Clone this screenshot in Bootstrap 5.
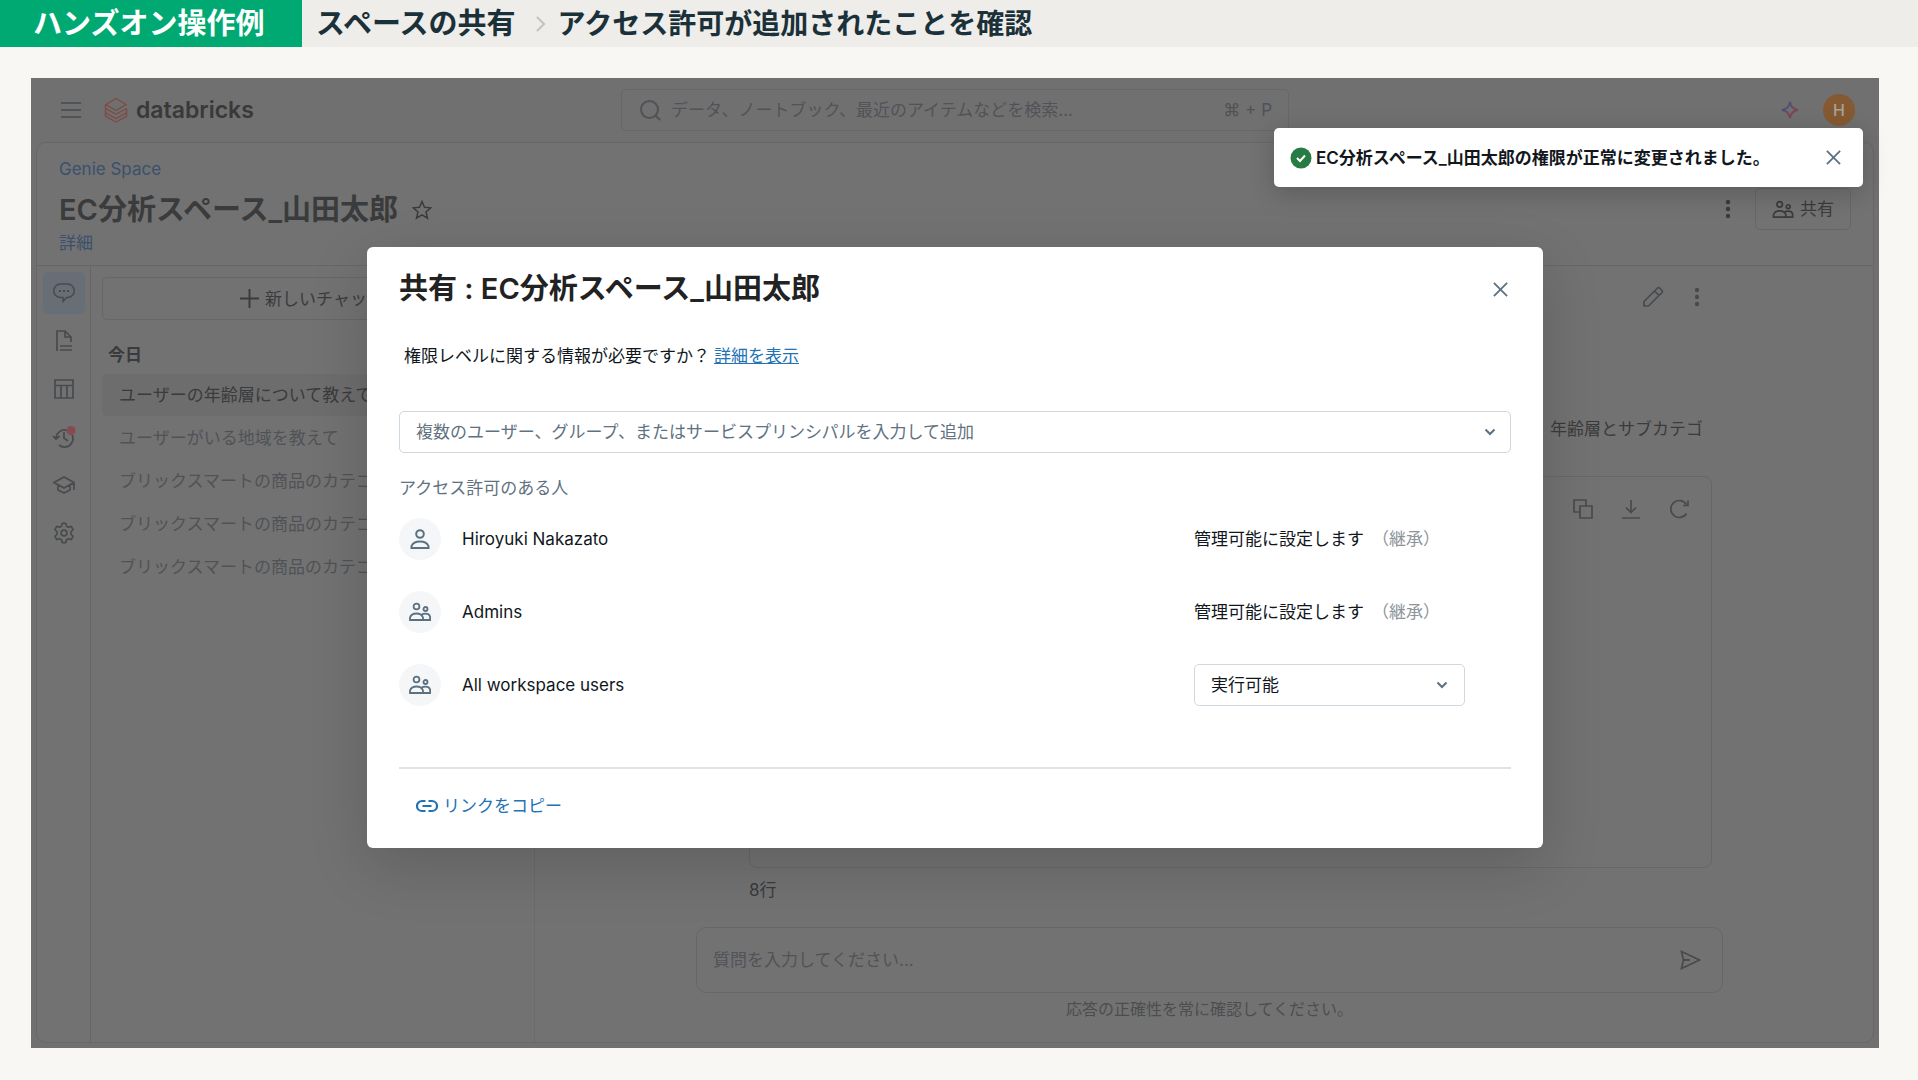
<!DOCTYPE html>
<html lang="ja">
<head>
<meta charset="utf-8">
<meta name="viewport" content="width=device-width, initial-scale=1">
<title>スペースの共有</title>
<link href="https://cdn.jsdelivr.net/npm/bootstrap@5.3.0/dist/css/bootstrap.min.css" rel="stylesheet">
<style>
  :root { --dim: #727272; --dim-line: #676767; --dim-text: #3a3b3c; --dim-muted: #4f5256; --dim-blue: #3a506c; }
  body { background: #f9f7f3; font-family: Inter, "Noto Sans CJK JP", sans-serif; font-size: 17px; line-height: 24px; color: #11171c; }
  svg { display: block; flex: none; fill: none; stroke: currentColor; stroke-width: 1.5; }
  button { color: inherit; }
  .plain-btn { border: 0; background: none; padding: 0; }

  .slide-bar { height: 47px; background: #eeedea; color: #1b3139; font-size: 28px; font-weight: 700; line-height: 46px; }
  .slide-tag { background: #00a972; color: #fff; width: 302px; padding-left: 33px; font-size: 29px; line-height: 47px; }
  .slide-topic { font-size: 29px; padding-left: 14px; }
  .slide-bar svg { color: #c4c4c2; margin: 0 11px 0 19px; }

  .stage { margin: 31px 39px 32px 31px; background: #707070; color: var(--dim-text); }
  .topbar { display: grid; grid-template-columns: 1fr 668px 1fr; height: 64px; padding: 0 24px; color: var(--dim-muted); }
  .menu-btn { margin: 0 23px 0 6px; }
  .brand { color: #393939; font-size: 23px; font-weight: 600; text-decoration: none; gap: 8px; }
  .brand svg { color: #7d4b45; }
  .search-box { height: 42px; border: 1px solid var(--dim-line); border-radius: 5px; padding: 0 16px 0 17px; gap: 10px; }
  .search-box input, .composer input { background: none; border: 0; outline: 0; color: inherit; padding: 0; min-width: 0; }
  .stage input::placeholder { color: #505358; opacity: 1; }
  .avatar-h { width: 32px; height: 32px; background: #855a32; color: #a9a29b; font-size: 16px; font-weight: 500; }

  .panel { background: var(--dim); border: 1px solid var(--dim-line); border-radius: 10px; margin: 0 5px 5px 5px; }
  .panel-head { padding: 14px 22px 10px 22px; height: 123px; border-bottom: 1px solid var(--dim-line); }
  .panel-head a { color: var(--dim-blue); text-decoration: none; }
  .space-title { font-size: 29px; font-weight: 600; line-height: 36px; margin: 11px 0 3px; gap: 14px; }
  .head-actions { padding-top: 6px; }
  .share-btn { height: 42px; border: 1px solid var(--dim-line); border-radius: 5px; padding: 0 16px; gap: 6px; background: none; }
  .rail { width: 54px; padding-top: 6px; gap: 6px; border-right: 1px solid var(--dim-line); color: #484b4e; }
  .rail button { width: 42px; height: 42px; border-radius: 5px; }
  .rail .on { background: #676e75; }
  .history { width: 444px; padding: 11px 12px 0 11px; border-right: 1px solid #6b6b6b; }
  .new-chat { height: 43px; border: 1px solid var(--dim-line); border-radius: 5px; background: none; gap: 6px; }
  .history h2 { font-size: 17px; line-height: 24px; font-weight: 700; margin: 23px 0 7px 6px; }
  .history a { height: 42px; margin-bottom: 1px; padding: 9px 17px; color: #505256; text-decoration: none; border-radius: 5px; white-space: nowrap; overflow: hidden; }
  .history a.on { background: #6d6d6d; color: var(--dim-text); }
  .thread { padding: 0 150px 0 161px; color: #484b4e; }
  .msg-tools { height: 62px; gap: 22px; padding-right: 15px; }
  .answer { padding: 89px 20px 0 53px; margin-bottom: 35px; color: var(--dim-text); }
  .result { margin: 0 11px 0 53px; border: 1px solid var(--dim-line); border-radius: 8px; padding: 22px; gap: 28px; }
  .row-count { margin: 10px 0 25px 53px; color: var(--dim-text); }
  .composer { height: 66px; border: 1px solid var(--dim-line); border-radius: 10px; padding: 0 21px 0 16px; }
  .notice { font-size: 16px; margin: 4px 0 21px; color: #4b4e51; }

  .overlay-layer { padding: 169px 24px 0; pointer-events: none; }
  .share-dialog { width: 100%; max-width: 1176px; background: #fff; color: #11171c; border-radius: 6px; padding: 24px 32px 30px; box-shadow: 0 18px 60px rgba(0,0,0,.16); pointer-events: auto; }
  .share-dialog h1 { font-size: 29px; line-height: 36px; font-weight: 600; margin: 0; color: #222; }
  .x-btn { color: #5a7182; padding: 0 2px; }
  .help-line { margin: 37px 5px 43px; }
  .help-line a { color: #2272b4; margin-left: 4px; }
  .field { height: 42px; border: 1px solid #cdd8e1; border-radius: 5px; background: #fff; }
  .field svg { right: 14px; top: 14px; color: #5a7182; pointer-events: none; }
  .field input, .field select { width: 100%; height: 100%; border: 0; outline: 0; background: none; padding: 0 16px; color: #11171c; appearance: none; border-radius: 5px; }
  .field input::placeholder { color: #5f7281; opacity: 1; }
  .section-label { color: #5f7281; margin: 23px 0 18px; }
  .people { gap: 31px; margin-bottom: 61px; }
  .person-dot { width: 42px; height: 42px; background: #f5f6f8; color: #5a7182; margin-right: 21px; }
  .grant { width: 317px; }
  .inherit { color: #8d9499; margin-left: 8px; }
  .level { width: 271px; }
  .level svg { right: 16px; }
  .dialog-foot { border-top: 2px solid #dce4e9; padding: 25px 17px 0; }
  .copy-link { color: #2272b4; gap: 5px; }
  .done-toast { top: 50px; right: 16px; height: 59px; min-width: 589px; background: #fff; color: #11171c; border-radius: 5px; padding: 0 19px 0 16px; font-weight: 600; box-shadow: 0 6px 26px rgba(0,0,0,.2); }
</style>
<script src="https://cdn.jsdelivr.net/npm/bootstrap@5.3.0/dist/js/bootstrap.bundle.min.js"></script>
</head>
<body class="min-vh-100 d-flex flex-column">

<svg class="d-none">
  <symbol id="i-x" viewBox="0 0 18 18"><path d="M2 2l14 14M16 2L2 16" stroke-width="1.9"/></symbol>
  <symbol id="i-down" viewBox="0 0 12 12"><path d="M1.500 3.500L6 8l4.500-4.500" stroke-width="2"/></symbol>
  <symbol id="i-dots" viewBox="0 0 6 20"><g fill="currentColor" stroke="none"><circle cx="3" cy="3" r="2.200"/><circle cx="3" cy="10" r="2.200"/><circle cx="3" cy="17" r="2.200"/></g></symbol>
  <symbol id="i-group" viewBox="0 0 22 20"><g stroke-width="1.800"><circle cx="7.500" cy="4.500" r="2.900"/><circle cx="16.500" cy="7" r="2"/><path d="M1 18v-2.500c1-2.800 3.600-4 6.500-4s5.500 1.200 6.500 4V18zM12.500 12.800c1-.7 2.500-1.100 4-1.100 2.200 0 4 1 4.600 2.800V18H14"/></g></symbol>
  <symbol id="i-person" viewBox="0 0 20 22"><g stroke-width="2"><circle cx="10" cy="6" r="3.800"/><path d="M1.500 20v-2c1.200-3 4.700-4.500 8.500-4.500s7.300 1.500 8.500 4.500v2z"/></g></symbol>
</svg>

<header class="slide-bar d-flex align-items-center">
  <div class="slide-tag">ハンズオン操作例</div>
  <div class="slide-topic">スペースの共有</div>
  <svg width="12" height="18" viewBox="0 0 12 18"><path d="M2 2l7 7-7 7" stroke-width="2.200"/></svg>
  <div>アクセス許可が追加されたことを確認</div>
</header>

<main class="stage position-relative flex-grow-1 d-flex flex-column">
  <nav class="topbar align-items-center">
    <div class="d-flex align-items-center">
      <button class="plain-btn menu-btn" type="button" aria-label="メニュー"><svg width="20" height="18" viewBox="0 0 20 18"><path d="M0 2h20M0 9h20M0 16h20" stroke-width="2"/></svg></button>
      <a class="brand d-flex align-items-center" href="#">
        <svg width="24" height="26" viewBox="0 0 24 26"><path d="M12 13.500L2 7.500 12 1.500 22 7.500zM1.500 7.500v4L12 17.300 22.500 11.500M22.500 11.500v4.300L12 21.500 1.500 15.800v-4.300M1.500 15.800v3.500L12 25l10.500-5.700v-3.500" stroke-width="1.400"/></svg>
        <span>databricks</span>
      </a>
    </div>
    <div class="search-box d-flex align-items-center">
      <svg width="22" height="22" viewBox="0 0 22 22"><circle cx="10.500" cy="10.500" r="8.500" stroke-width="2"/><path d="M16.500 16.500L21 21" stroke-width="2"/></svg>
      <input class="flex-grow-1" type="search" aria-label="検索" placeholder="データ、ノートブック、最近のアイテムなどを検索...">
      <span>⌘ + P</span>
    </div>
    <div class="d-flex align-items-center justify-content-end gap-4">
      <button class="plain-btn" type="button" aria-label="アシスタント"><svg width="18" height="18" viewBox="0 0 18 18"><defs><linearGradient id="spark" x1="0" y1="0" x2="1" y2="1"><stop offset=".2" stop-color="#45507c"/><stop offset=".8" stop-color="#8b3f50"/></linearGradient></defs><path d="M9 1c.8 5 3 7.200 8 8-5 .8-7.200 3-8 8-.8-5-3-7.200-8-8 5-.8 7.200-3 8-8z" stroke="url(#spark)" stroke-width="1.800"/></svg></button>
      <button class="plain-btn avatar-h rounded-circle" type="button">H</button>
    </div>
  </nav>

  <section class="panel flex-grow-1 d-flex flex-column">
    <header class="panel-head d-flex justify-content-between">
      <div>
        <a class="d-block" href="#">Genie Space</a>
        <div class="space-title d-flex align-items-center"><span>EC分析スペース_山田太郎</span>
          <button class="plain-btn" type="button" aria-label="お気に入り"><svg width="20" height="20" viewBox="0 0 20 20"><path d="M10 1.500l2.500 5.800 6.300.5-4.800 4.100 1.500 6.200L10 14.800l-5.500 3.300L6 11.900 1.200 7.800l6.300-.5z"/></svg></button></div>
        <a class="d-block" href="#">詳細</a>
      </div>
      <div class="head-actions d-flex align-items-center gap-4">
        <button class="plain-btn" type="button" aria-label="その他"><svg width="6" height="20"><use href="#i-dots"/></svg></button>
        <button class="share-btn d-flex align-items-center" type="button"><svg width="22" height="19"><use href="#i-group"/></svg>共有</button>
      </div>
    </header>

    <div class="flex-grow-1 d-flex">
      <div class="rail d-flex flex-column align-items-center">
        <button class="plain-btn on d-flex align-items-center justify-content-center" type="button" aria-label="チャット"><svg width="22" height="20" viewBox="0 0 22 20"><path d="M7.500 1h7a6.500 6.500 0 0 1 0 13.500h-1L10 18.500v-4H7.500A6.500 6.500 0 0 1 7.500 1z"/><path d="M6 8h2m2 0h2m2 0h2" stroke-width="1.800"/></svg></button>
        <button class="plain-btn d-flex align-items-center justify-content-center" type="button" aria-label="指示"><svg width="18" height="22" viewBox="0 0 18 22"><path d="M2 21V1h8l6 6v5M10 1v6h6M5 16h12M5 20h12" stroke-width="1.700"/></svg></button>
        <button class="plain-btn d-flex align-items-center justify-content-center" type="button" aria-label="データ"><svg width="20" height="20" viewBox="0 0 20 20"><path d="M1 1h18v18H1zM1 6.500h18M7 6.500V19M13 6.500V19" stroke-width="1.700"/></svg></button>
        <button class="plain-btn d-flex align-items-center justify-content-center" type="button" aria-label="履歴"><svg width="24" height="22" viewBox="0 0 24 22"><path d="M4 12a8.500 8.500 0 1 1 3 7M1 10l3 3 3.500-3M12 6v6l4 3" stroke-width="1.700"/><circle cx="19" cy="4.500" r="4.500" fill="#874a51" stroke="none"/></svg></button>
        <button class="plain-btn d-flex align-items-center justify-content-center" type="button" aria-label="ベンチマーク"><svg width="22" height="20" viewBox="0 0 22 20"><path d="M11 2l10 5.500-10 5.500L1 7.500zM5 10v5l6 3 6-3v-5M21 7.500V15" stroke-width="1.700"/></svg></button>
        <button class="plain-btn d-flex align-items-center justify-content-center" type="button" aria-label="設定"><svg width="22" height="22" viewBox="0 0 24 24"><circle cx="12" cy="12" r="3.200" stroke-width="1.800"/><path d="M10 1.500h4l.8 3.200 2 1.100 3.100-1 2 3.500-2.300 2.300v2.800l2.300 2.300-2 3.500-3.100-1-2 1.100-.8 3.200h-4l-.8-3.200-2-1.100-3.100 1-2-3.500 2.300-2.300v-2.800L2.100 8.300l2-3.500 3.100 1 2-1.100z" stroke-width="1.800" stroke-linejoin="round"/></svg></button>
      </div>
      <aside class="history">
        <button class="new-chat w-100 d-flex align-items-center justify-content-center" type="button"><svg width="19" height="19" viewBox="0 0 19 19"><path d="M9.500 0v19M0 9.500h19" stroke-width="1.900"/></svg>新しいチャット</button>
        <h2>今日</h2>
        <a class="d-block on" href="#">ユーザーの年齢層について教えて</a>
        <a class="d-block" href="#">ユーザーがいる地域を教えて</a>
        <a class="d-block" href="#">ブリックスマートの商品のカテゴリ</a>
        <a class="d-block" href="#">ブリックスマートの商品のカテゴリ</a>
        <a class="d-block" href="#">ブリックスマートの商品のカテゴリ</a>
      </aside>
      <div class="thread flex-grow-1 d-flex flex-column">
        <div class="msg-tools d-flex align-items-center justify-content-end">
          <button class="plain-btn" type="button" aria-label="編集"><svg width="22" height="22" viewBox="0 0 22 22"><path d="M2 20v-4.500L15.500 2a1.500 1.500 0 0 1 2 0L20 4.500a1.500 1.500 0 0 1 0 2L6.500 20zM12.500 5l4.500 4.500" stroke-width="1.700"/></svg></button>
          <button class="plain-btn px-2" type="button" aria-label="その他"><svg width="6" height="20"><use href="#i-dots"/></svg></button>
        </div>
        <p class="answer text-end">年齢層とサブカテゴ</p>
        <div class="result flex-grow-1 d-flex align-items-start justify-content-end">
          <button class="plain-btn" type="button" aria-label="コピー"><svg width="20" height="20" viewBox="0 0 20 20"><path d="M7 13H1V1h12v6M7 7h12v12H7z" stroke-width="1.700"/></svg></button>
          <button class="plain-btn" type="button" aria-label="ダウンロード"><svg width="20" height="20" viewBox="0 0 20 20"><path d="M10 1v12M5 8.500l5 5 5-5M1 19h18" stroke-width="1.700"/></svg></button>
          <button class="plain-btn" type="button" aria-label="更新"><svg width="20" height="20" viewBox="0 0 20 20"><path d="M17.500 14.500a8.500 8.500 0 1 1 0-9M19 1.500v5h-5" stroke-width="1.700"/></svg></button>
        </div>
        <div class="row-count">8行</div>
        <div class="composer d-flex align-items-center">
          <input class="flex-grow-1" type="text" aria-label="質問" placeholder="質問を入力してください...">
          <button class="plain-btn" type="button" aria-label="送信"><svg width="21" height="20" viewBox="0 0 21 20"><path d="M1.500 1.500L19.500 10l-18 8.500L3.500 10zM3.500 10H10" stroke-width="1.800"/></svg></button>
        </div>
        <p class="notice text-center">応答の正確性を常に確認してください。</p>
      </div>
    </div>
  </section>

  <div class="overlay-layer position-absolute top-0 start-0 w-100 h-100 d-flex justify-content-center align-items-start">
    <div class="share-dialog" role="dialog" aria-labelledby="shareTitle">
      <div class="d-flex align-items-center justify-content-between">
        <h1 id="shareTitle">共有 : EC分析スペース_山田太郎</h1>
        <button class="plain-btn x-btn" type="button" aria-label="閉じる"><svg width="17" height="17"><use href="#i-x"/></svg></button>
      </div>
      <p class="help-line">権限レベルに関する情報が必要ですか？<a href="#">詳細を表示</a></p>
      <div class="field position-relative">
        <input type="text" aria-label="ユーザーを追加" placeholder="複数のユーザー、グループ、またはサービスプリンシパルを入力して追加">
        <svg class="position-absolute" width="12" height="12"><use href="#i-down"/></svg>
      </div>
      <div class="section-label">アクセス許可のある人</div>
      <div class="people d-flex flex-column">
        <div class="d-flex align-items-center">
          <span class="person-dot rounded-circle d-flex align-items-center justify-content-center"><svg width="20" height="22"><use href="#i-person"/></svg></span>
          <span class="flex-grow-1">Hiroyuki Nakazato</span>
          <span class="grant">管理可能に設定します<span class="inherit">（継承）</span></span>
        </div>
        <div class="d-flex align-items-center">
          <span class="person-dot rounded-circle d-flex align-items-center justify-content-center"><svg width="22" height="20"><use href="#i-group"/></svg></span>
          <span class="flex-grow-1">Admins</span>
          <span class="grant">管理可能に設定します<span class="inherit">（継承）</span></span>
        </div>
        <div class="d-flex align-items-center">
          <span class="person-dot rounded-circle d-flex align-items-center justify-content-center"><svg width="22" height="20"><use href="#i-group"/></svg></span>
          <label class="flex-grow-1" for="level">All workspace users</label>
          <div class="grant"><div class="field level position-relative">
            <select id="level"><option>実行可能</option></select>
            <svg class="position-absolute" width="12" height="12"><use href="#i-down"/></svg>
          </div></div>
        </div>
      </div>
      <div class="dialog-foot">
        <button class="plain-btn copy-link d-flex align-items-center" type="button"><svg width="22" height="14" viewBox="0 0 22 14"><path d="M9.500 2H6a5 5 0 0 0 0 10h3.500M12.500 2H16a5 5 0 0 1 0 10h-3.500M6.500 7h9" stroke-width="2.200"/></svg>リンクをコピー</button>
      </div>
    </div>
  </div>

  <div class="done-toast position-absolute d-flex align-items-center" role="status">
    <svg class="me-1" width="22" height="22" viewBox="0 0 22 22"><circle cx="11" cy="11" r="10.500" fill="#277c43" stroke="none"/><path d="M7 11l3 3 5-5.500" stroke="#fff" stroke-width="2"/></svg>
    <span class="flex-grow-1">EC分析スペース_山田太郎の権限が正常に変更されました。</span>
    <button class="plain-btn x-btn" type="button" aria-label="通知を閉じる"><svg width="17" height="17"><use href="#i-x"/></svg></button>
  </div>
</main>
</body>
</html>
